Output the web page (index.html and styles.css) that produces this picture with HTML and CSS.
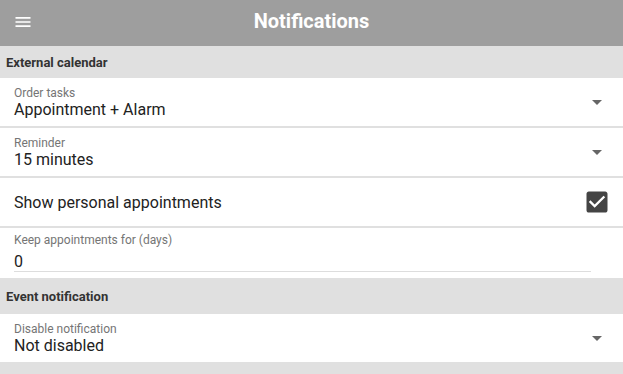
FILE: index.html
```html
<!DOCTYPE html>
<html>
<head>
<meta charset="utf-8">
<link rel="stylesheet" href="styles.css">
</head>
<body>
<div class="app">
  <header class="topbar">
    <svg class="menu" viewBox="0 0 24 24" width="20" height="20"><path fill="#fff" d="M3 18h18v-2H3v2zm0-5h18v-2H3v2zm0-7v2h18V6H3z"/></svg>
    <h1 class="title">Notifications</h1>
  </header>

  <div class="section">External calendar</div>

  <div class="row">
    <div class="text">
      <div class="label">Order tasks</div>
      <div class="value">Appointment + Alarm</div>
    </div>
    <svg class="icon" viewBox="0 0 24 24" width="24" height="24"><path fill="#666" d="M7 10l5 5 5-5z"/></svg>
  </div>

  <div class="row">
    <div class="text">
      <div class="label">Reminder</div>
      <div class="value">15 minutes</div>
    </div>
    <svg class="icon" viewBox="0 0 24 24" width="24" height="24"><path fill="#666" d="M7 10l5 5 5-5z"/></svg>
  </div>

  <div class="row">
    <div class="text">
      <div class="value">Show personal appointments</div>
    </div>
    <svg class="check" viewBox="0 0 24 24" width="28" height="28"><path fill="#444" d="M19 3H5c-1.11 0-2 .9-2 2v14c0 1.1.89 2 2 2h14c1.11 0 2-.9 2-2V5c0-1.1-.89-2-2-2zm-9 14l-5-5 1.41-1.41L10 14.17l7.59-7.59L19 8l-9 9z"/></svg>
  </div>

  <div class="row row-input">
    <div class="label">Keep appointments for (days)</div>
    <div class="input">0</div>
  </div>

  <div class="section section-tall">Event notification</div>

  <div class="row">
    <div class="text">
      <div class="label">Disable notification</div>
      <div class="value">Not disabled</div>
    </div>
    <svg class="icon" viewBox="0 0 24 24" width="24" height="24"><path fill="#666" d="M7 10l5 5 5-5z"/></svg>
  </div>
</div>
</body>
</html>
```

FILE: styles.css
```css
html, body {
  margin: 0;
  padding: 0;
  background: #e0e0e0;
  font-family: Roboto, "Liberation Sans", Arial, sans-serif;
}

.app {
  width: 623px;
  height: 374px;
  overflow: hidden;
  background: #e0e0e0;
}

.topbar {
  height: 46px;
  background: #9e9e9e;
  display: flex;
  align-items: center;
  justify-content: center;
  position: relative;
}

.menu {
  position: absolute;
  left: 13px;
  top: 12px;
}

.title {
  margin: 0 0 4px 0;
  color: #fff;
  font-size: 20px;
  font-weight: 700;
  line-height: 24px;
}

.section {
  height: 32px;
  line-height: 33px;
  padding-left: 6px;
  font-size: 13px;
  font-weight: 700;
  color: #333;
  background: #e0e0e0;
}

.section-tall {
  height: 34px;
  line-height: 34px;
}

.row {
  height: 48px;
  background: #fff;
  border-bottom: 2px solid #e0e0e0;
  display: flex;
  align-items: center;
  padding: 0 14px;
}

.row > .text {
  flex: 1;
  padding-top: 1px;
}

.label {
  font-size: 12px;
  line-height: 14px;
  color: #757575;
}

.value {
  font-size: 16px;
  line-height: 19px;
  color: #222;
}

.icon {
  flex: none;
}

.check {
  flex: none;
  margin-right: -2px;
}

.row-input {
  height: 50px;
  display: block;
  padding-right: 32px;
}

.row-input .label {
  padding-top: 5px;
}

.input {
  margin-top: 2px;
  padding-top: 4px;
  font-size: 16px;
  line-height: 18px;
  color: #222;
  border-bottom: 1px solid #ddd;
}
```
